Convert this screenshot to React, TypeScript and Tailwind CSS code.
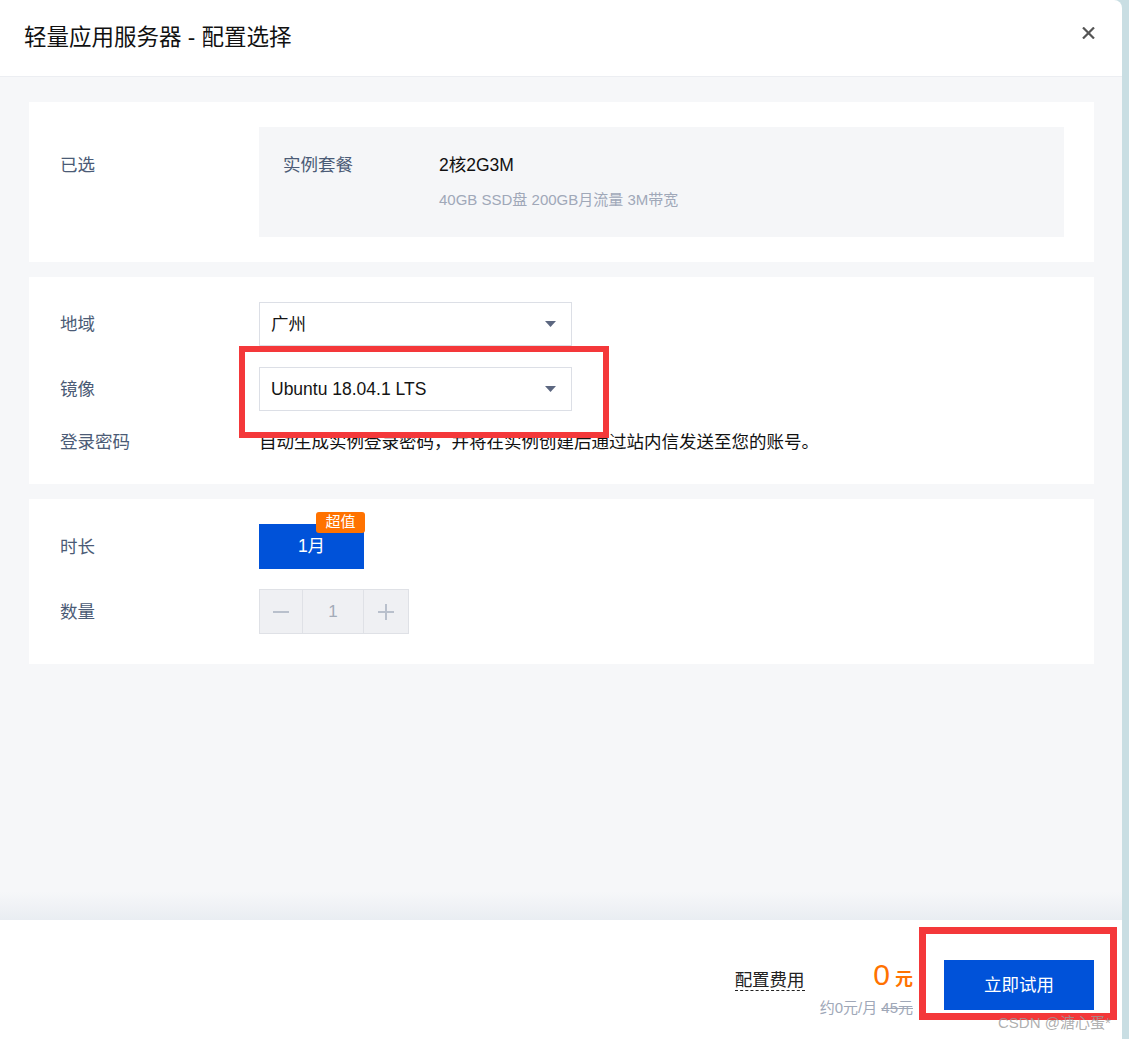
import React from 'react'

const font = { fontFamily: '"Liberation Sans", "Noto Sans CJK SC", sans-serif' }

function Caret() {
  return (
    <svg width="11" height="6" viewBox="0 0 11 6" className="shrink-0">
      <path d="M0 0h11L5.5 6z" fill="#5c6780" />
    </svg>
  )
}

function Select({ value }: { value: string }) {
  return (
    <div className="flex h-[44px] w-[313px] items-center justify-between border border-[#dcdfe6] bg-white pl-[11px] pr-[15px]">
      <span className="text-[17.5px] text-[#141414]">{value}</span>
      <Caret />
    </div>
  )
}

function Label({ children, className = '' }: { children: React.ReactNode; className?: string }) {
  return <div className={`w-[199px] shrink-0 text-[17.5px] leading-[20px] text-[#4b5b76] ${className}`}>{children}</div>
}

export default function App() {
  return (
    <div style={font} className="relative flex h-[1039px] w-[1129px] overflow-hidden bg-[#c9dee3]">
      <div className="flex h-full w-[1122px] flex-col overflow-hidden rounded-tr-[8px] bg-white">
        {/* Header */}
        <div className="flex h-[77px] shrink-0 justify-between border-b border-[#eceef2] pl-[24px] pr-[27px]">
          <h1 className="mt-[26px] text-[22.5px] leading-[24px] text-[#111]">轻量应用服务器 - 配置选择</h1>
          <svg width="13" height="12" viewBox="0 0 13 12" className="mt-[27px]">
            <path d="M1 0.5l11 11M12 0.5l-11 11" stroke="#555" strokeWidth="2.2" />
          </svg>
        </div>

        {/* Body */}
        <div className="flex flex-1 flex-col bg-[#f6f7f9]">
          <div className="flex flex-col gap-[15px] pl-[29px] pr-[28px] pt-[25px]">
            {/* Selected */}
            <div className="flex bg-white py-[25px] pl-[31px] pr-[30px]">
              <Label className="pt-[28px]">已选</Label>
              <div className="flex h-[110px] flex-1 bg-[#f5f6f8] px-[24px] pt-[28px]">
                <div className="w-[156px] text-[17.5px] leading-[20px] text-[#4b5b76]">实例套餐</div>
                <div>
                  <div className="text-[17.5px] leading-[20px] text-[#111]">2核2G3M</div>
                  <div className="mt-[15px] text-[15px] leading-[20px] text-[#a0a8b8]">40GB SSD盘 200GB月流量 3M带宽</div>
                </div>
              </div>
            </div>

            {/* Region / image / password */}
            <div className="flex flex-col bg-white pb-[32px] pl-[31px] pt-[25px]">
              <div className="flex items-center">
                <Label>地域</Label>
                <Select value="广州" />
              </div>
              <div className="mt-[21px] flex items-center">
                <Label>镜像</Label>
                <Select value="Ubuntu 18.04.1 LTS" />
              </div>
              <div className="mt-[21px] flex items-center">
                <Label>登录密码</Label>
                <div className="text-[17.5px] leading-[20px] text-[#111]">自动生成实例登录密码，并将在实例创建后通过站内信发送至您的账号。</div>
              </div>
            </div>

            {/* Duration / quantity */}
            <div className="flex flex-col bg-white pb-[30px] pl-[31px] pt-[25px]">
              <div className="flex items-center">
                <Label>时长</Label>
                <div className="relative flex h-[45px] w-[105px] items-center justify-center bg-[#0052d9] text-[17.5px] text-white">
                  1月
                  <span className="absolute right-[-1px] top-[-12px] flex h-[21px] w-[49px] items-center justify-center rounded-[3px] bg-[#ff7200] text-[15px] text-white">
                    超值
                  </span>
                </div>
              </div>
              <div className="mt-[20px] flex items-center">
                <Label>数量</Label>
                <div className="flex h-[45px] border border-[#dfe1e6] bg-[#eff0f3]">
                  <div className="flex w-[43px] items-center justify-center border-r border-[#dfe1e6]">
                    <svg width="16" height="2" viewBox="0 0 16 2"><path d="M0 1h16" stroke="#b9c0cc" strokeWidth="2" /></svg>
                  </div>
                  <div className="flex w-[61px] items-center justify-center border-r border-[#dfe1e6] text-[17px] text-[#a3abb8]">1</div>
                  <div className="flex w-[44px] items-center justify-center">
                    <svg width="16" height="16" viewBox="0 0 16 16"><path d="M0 8h16M8 0v16" stroke="#b9c0cc" strokeWidth="2" /></svg>
                  </div>
                </div>
              </div>
            </div>
          </div>
          <div className="flex-1" />
          <div className="h-[28px] bg-gradient-to-b from-[#f6f7f9] to-[#e9edf2]" />
        </div>

        {/* Footer */}
        <div className="flex h-[119px] shrink-0 items-start justify-end bg-white pr-[28px] pt-[40px]">
          <div className="mt-[10px] border-b border-dashed border-[#222] text-[17.5px] leading-[20px] text-[#222]">配置费用</div>
          <div className="ml-[15px] mr-[31px] flex flex-col items-end">
            <div className="flex items-baseline leading-none text-[#ff7200]">
              <span className="text-[30px]">0</span>
              <span className="ml-[5px] text-[18px] font-bold">元</span>
            </div>
            <div className="mt-[8px] text-[15px] leading-[20px] text-[#a0a8b8]">
              约0元/月 <span className="line-through">45元</span>
            </div>
          </div>
          <button className="flex h-[50px] w-[150px] items-center justify-center bg-[#0052d9] text-[17.5px] text-white">立即试用</button>
        </div>
      </div>

      {/* annotation boxes */}
      <div className="absolute left-[239px] top-[346px] h-[92px] w-[370px] border-[6px] border-[#f4383a]" />
      <div className="absolute left-[919px] top-[927px] h-[93px] w-[198px] border-[7px] border-[#f4383a]" />
      <div className="absolute left-[998px] top-[1012px] text-[15px] text-[#9a9a9a]/80">CSDN @溏心蛋*</div>
    </div>
  )
}
